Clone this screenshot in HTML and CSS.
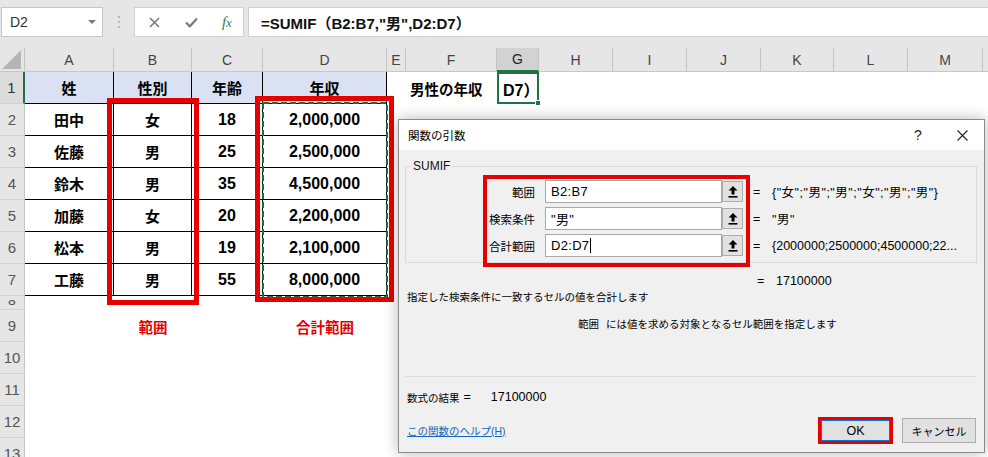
FILE: index.html
```html
<!DOCTYPE html>
<html lang="ja">
<head>
<meta charset="utf-8">
<title>SUMIF 関数の引数</title>
<link rel="stylesheet" href="styles.css">
</head>
<body>
<div class="app">
  <div class="fbar">
    <div class="namebox"><span>D2</span><span class="dd"></span></div>
    <div class="grip"><svg width="2" height="12" viewBox="0 0 2 12"><rect x="0" y="0" width="2" height="2" fill="#b8b8b8"/><rect x="0" y="5" width="2" height="2" fill="#b8b8b8"/><rect x="0" y="10" width="2" height="2" fill="#b8b8b8"/></svg></div>
    <div class="fbtns">
      <svg class="ic-x" width="11" height="11" viewBox="0 0 11 11"><path d="M1 1L10 10M10 1L1 10" stroke="#7b7b7b" stroke-width="1.6"/></svg>
      <svg class="ic-ok" width="13" height="11" viewBox="0 0 13 11"><path d="M1 5.5L4.8 9.3L12 1.5" stroke="#7b7b7b" stroke-width="2.2" fill="none"/></svg>
      <span class="fx"><i>f</i><i class="fxx">x</i></span>
    </div>
    <div class="finput">=SUMIF（B2:B7,"男",D2:D7）</div>
  </div>

  <div class="sheet">
    <div class="colhdr">
      <div class="corner"><svg width="20" height="19" viewBox="0 0 20 19"><path d="M19 0L19 19L0 19Z" fill="#b5b5b5"/></svg></div>
      <div class="ch wa">A</div>
      <div class="ch wb">B</div>
      <div class="ch wc">C</div>
      <div class="ch wd">D</div>
      <div class="ch we">E</div>
      <div class="ch wf">F</div>
      <div class="ch wg chsel">G</div>
      <div class="ch wh">H</div>
      <div class="ch wi">I</div>
      <div class="ch wj">J</div>
      <div class="ch wk">K</div>
      <div class="ch wl">L</div>
      <div class="ch wm">M</div>
      <div class="ch wn"></div>
    </div>

    <div class="row">
      <div class="rh rhsel">1</div>
      <div class="c wa tc th">姓</div>
      <div class="c wb tc th">性別</div>
      <div class="c wc tc th">年齢</div>
      <div class="c wd tc th">年収</div>
      <div class="c we"></div>
      <div class="c wf f1">男性の年収</div>
      <div class="c wg act">D7）<span class="handle"></span></div>
    </div>
    <div class="row">
      <div class="rh">2</div>
      <div class="c wa tc">田中</div>
      <div class="c wb tc">女</div>
      <div class="c wc tc num">18</div>
      <div class="c wd tc num">2,000,000</div>
    </div>
    <div class="row">
      <div class="rh">3</div>
      <div class="c wa tc">佐藤</div>
      <div class="c wb tc">男</div>
      <div class="c wc tc num">25</div>
      <div class="c wd tc num">2,500,000</div>
    </div>
    <div class="row">
      <div class="rh">4</div>
      <div class="c wa tc">鈴木</div>
      <div class="c wb tc">男</div>
      <div class="c wc tc num">35</div>
      <div class="c wd tc num">4,500,000</div>
    </div>
    <div class="row">
      <div class="rh">5</div>
      <div class="c wa tc">加藤</div>
      <div class="c wb tc">女</div>
      <div class="c wc tc num">20</div>
      <div class="c wd tc num">2,200,000</div>
    </div>
    <div class="row">
      <div class="rh">6</div>
      <div class="c wa tc">松本</div>
      <div class="c wb tc">男</div>
      <div class="c wc tc num">19</div>
      <div class="c wd tc num">2,100,000</div>
    </div>
    <div class="row">
      <div class="rh">7</div>
      <div class="c wa tc">工藤</div>
      <div class="c wb tc">男</div>
      <div class="c wc tc num">55</div>
      <div class="c wd tc num">8,000,000</div>
    </div>
    <div class="row row8">
      <div class="rh rh8"><span class="clip">8</span></div>
    </div>
    <div class="row">
      <div class="rh">9</div>
      <div class="c wa"></div>
      <div class="c wb lbl">範囲</div>
      <div class="c wc"></div>
      <div class="c wd lbl">合計範囲</div>
    </div>
    <div class="row"><div class="rh">10</div></div>
    <div class="row"><div class="rh">11</div></div>
    <div class="row"><div class="rh">12</div></div>
    <div class="row"><div class="rh">13</div></div>
  </div>

  <div class="hl hl-b"></div>
  <div class="hl hl-d"></div>
  <svg class="marq" width="126" height="196" viewBox="0 0 126 196"><rect x="1" y="1" width="124" height="194" fill="none" stroke="#1e6b41" stroke-width="2" stroke-dasharray="6 3"/></svg>

  <div class="dlg">
    <div class="dtitle">
      <span class="dt">関数の引数</span>
      <span class="tb q">?</span>
      <span class="tb"><svg width="11" height="11" viewBox="0 0 11 11"><path d="M0.5 0.5L10.5 10.5M10.5 0.5L0.5 10.5" stroke="#222" stroke-width="1.1"/></svg></span>
    </div>
    <div class="dbody">
      <fieldset class="grp">
        <legend>SUMIF</legend>
        <div class="args">
          <div class="arg">
            <span class="an">範囲</span>
            <div class="inp">B2:B7</div>
            <div class="rb"><svg width="10" height="12" viewBox="0 0 10 12"><path d="M5 0L9.5 4.5L6.5 4.5L6.5 8.5L3.5 8.5L3.5 4.5L0.5 4.5Z" fill="#000"/><rect x="0.5" y="10" width="9" height="1.6" fill="#000"/></svg></div>
            <span class="eq">=</span>
            <span class="val vq">{"女";"男";"男";"女";"男";"男"}</span>
          </div>
          <div class="arg">
            <span class="an">検索条件</span>
            <div class="inp">"男"</div>
            <div class="rb"><svg width="10" height="12" viewBox="0 0 10 12"><path d="M5 0L9.5 4.5L6.5 4.5L6.5 8.5L3.5 8.5L3.5 4.5L0.5 4.5Z" fill="#000"/><rect x="0.5" y="10" width="9" height="1.6" fill="#000"/></svg></div>
            <span class="eq">=</span>
            <span class="val vq">"男"</span>
          </div>
          <div class="arg">
            <span class="an">合計範囲</span>
            <div class="inp">D2:D7<span class="caret"></span></div>
            <div class="rb"><svg width="10" height="12" viewBox="0 0 10 12"><path d="M5 0L9.5 4.5L6.5 4.5L6.5 8.5L3.5 8.5L3.5 4.5L0.5 4.5Z" fill="#000"/><rect x="0.5" y="10" width="9" height="1.6" fill="#000"/></svg></div>
            <span class="eq">=</span>
            <span class="val">{2000000;2500000;4500000;22...</span>
          </div>
        </div>
      </fieldset>
      <div class="res1"><span class="eq">=</span><span class="val">17100000</span></div>
      <div class="desc">指定した検索条件に一致するセルの値を合計します</div>
      <div class="adesc"><span class="aname">範囲</span><span>には値を求める対象となるセル範囲を指定します</span></div>
      <div class="sep"></div>
      <div class="fres"><span>数式の結果</span><span class="feq">=</span><span class="fnum">17100000</span></div>
      <div class="foot">
        <a class="help">この関数のヘルプ(H)</a>
        <div class="okw"><button class="btn ok">OK</button></div>
        <button class="btn cancel">キャンセル</button>
      </div>
    </div>
  </div>
  <div class="hl hl-f"></div>
</div>
</body>
</html>
```

FILE: styles.css
```css
* { box-sizing: border-box; }
html, body { margin: 0; padding: 0; }
body {
  width: 988px;
  height: 457px;
  overflow: hidden;
  background: #fff;
  font-family: "Liberation Sans", "Noto Sans CJK JP", sans-serif;
  color: #000;
}
.app { position: relative; width: 988px; height: 457px; overflow: hidden; }

/* formula bar */
.fbar {
  height: 48px;
  background: #e6e6e6;
  display: flex;
  align-items: flex-start;
  padding-top: 7px;
}
.namebox {
  margin-left: 1px;
  width: 102px;
  height: 30px;
  background: #fff;
  border: 1px solid #c6c6c6;
  display: flex;
  align-items: center;
  justify-content: space-between;
  padding: 0 6px 0 8px;
  font-size: 14px;
  color: #333;
}
.dd {
  width: 0; height: 0;
  border-left: 4px solid transparent;
  border-right: 4px solid transparent;
  border-top: 4px solid #7a7a7a;
}
.grip { width: 31px; height: 30px; display: flex; align-items: center; justify-content: center; }
.fbtns {
  width: 110px;
  height: 30px;
  background: #fff;
  border: 1px solid #d0d0d0;
  display: flex;
  align-items: center;
  padding-left: 14px;
}
.ic-x { margin-right: 25px; }
.ic-ok { margin-right: 24px; }
.fx { font-family: "Liberation Serif", serif; color: #2e7d4f; font-size: 15px; line-height: 1; }
.fxx { font-size: 12px; }
.finput {
  flex: 1;
  margin-left: 4px;
  height: 30px;
  background: #fff;
  border: 1px solid #d0d0d0;
  border-right: none;
  display: flex;
  align-items: center;
  padding-left: 12px;
  font-size: 15px;
  font-weight: bold;
  color: #111;
}

/* sheet */
.sheet { display: flex; flex-direction: column; }
.colhdr { display: flex; height: 24px; background: #e6e6e6; border-bottom: 1px solid #c8c8c8; }
.corner { width: 25px; height: 24px; border-right: 1px solid #c4c4c4; display: flex; align-items: flex-end; justify-content: flex-end; padding: 0 2px 3px 0; }
.ch {
  height: 24px;
  border-right: 1px solid #c4c4c4;
  display: flex;
  align-items: center;
  justify-content: center;
  font-size: 14px;
  color: #444;
}
.chsel { background: #d2d2d2; color: #222; border-bottom: 2px solid #217346; }
.wa { width: 89px; }
.wb { width: 78px; }
.wc { width: 71px; }
.wd { width: 124px; }
.we { width: 19px; }
.wf { width: 91px; }
.wg { width: 42px; }
.wh { width: 74px; }
.wi { width: 74px; }
.wj { width: 74px; }
.wk { width: 73px; }
.wl { width: 74px; }
.wm { width: 75px; }
.wn { width: 5px; border-right: none; }

.row { display: flex; height: 32px; flex-shrink: 0; }
.row8 { height: 14px; }
.rh {
  width: 25px;
  height: 100%;
  background: #e6e6e6;
  border-right: 1px solid #c4c4c4;
  border-bottom: 1px solid #d2d2d2;
  display: flex;
  align-items: center;
  justify-content: center;
  font-size: 15px;
  color: #555;
  overflow: hidden;
}
.rhsel { background: #dcdcdc; border-right: 2px solid #217346; color: #333; }
.rh8 { align-items: flex-start; }
.clip { display: block; height: 9px; overflow: hidden; line-height: 18px; padding-top: 0; }
.c { height: 100%; display: flex; align-items: center; justify-content: center; }
.tc {
  border-right: 1px solid #000;
  border-bottom: 1px solid #000;
  font-weight: bold;
  font-size: 15px;
}
.th { background: #d9e1f2; }
.num { font-size: 16px; }
.f1 { justify-content: flex-start; padding-left: 4px; font-weight: bold; font-size: 14.5px; }
.act {
  position: relative;
  justify-content: flex-start;
  align-items: flex-end;
  padding: 0 0 1px 4px;
  border: 2px solid #217346;
  font-weight: bold;
  font-size: 16px;
}
.handle {
  position: absolute;
  right: -4px;
  bottom: -4px;
  width: 6px;
  height: 6px;
  background: #217346;
  border: 1px solid #fff;
}
.lbl { color: #e60000; font-weight: bold; font-size: 14.5px; }

/* highlight overlays */
.hl { position: absolute; border: 5px solid #e60000; }
.hl-b { left: 107px; top: 98px; width: 92px; height: 207px; }
.hl-d { left: 255px; top: 96px; width: 139px; height: 206px; }
.hl-f { left: 483px; top: 175px; width: 267px; height: 92px; border-width: 4px; }
.marq { position: absolute; left: 262px; top: 102px; }

/* dialog */
.dlg {
  position: absolute;
  left: 398px;
  top: 119px;
  width: 587px;
  height: 334px;
  background: #f0f0f0;
  border: 1px solid #8c8c8c;
  box-shadow: 0 0 14px rgba(0, 0, 0, 0.28);
  display: flex;
  flex-direction: column;
}
.dtitle {
  height: 30px;
  background: #fff;
  display: flex;
  align-items: center;
  padding-left: 9px;
  font-size: 11.5px;
}
.dt { flex: 1; }
.tb { width: 44px; height: 30px; display: flex; align-items: center; justify-content: center; }
.q { font-size: 14px; color: #222; }
.dbody { flex: 1; display: flex; flex-direction: column; padding: 0 7px 0 6px; }
.grp {
  margin: 8px 0 0 0;
  padding: 6px 0 5px 0;
  border: 1px solid #dadada;
  min-width: 0;
}
.grp legend { font-size: 12px; line-height: 16px; padding: 0 2px; margin-left: 5px; color: #111; }
.args { display: flex; flex-direction: column; gap: 4px; padding-left: 79px; }
.arg { display: flex; align-items: center; height: 23px; }
.an { width: 50px; text-align: right; font-size: 11.5px; margin-right: 10px; }
.inp {
  width: 177px;
  height: 23px;
  background: #fff;
  border: 1px solid #a8a8a8;
  display: flex;
  align-items: center;
  padding-left: 5px;
  font-size: 13px;
  letter-spacing: 0.3px;
}
.caret { display: inline-block; width: 1px; height: 15px; background: #000; margin-left: 1px; }
.rb {
  width: 21px;
  height: 21px;
  background: #e1e1e1;
  border: 1px solid #adadad;
  display: flex;
  align-items: center;
  justify-content: center;
}
.eq { font-size: 12.5px; margin-left: 10px; width: 19px; }
.val { font-size: 12.5px; white-space: nowrap; }
.vq { letter-spacing: 0.5px; }
.res1 { display: flex; align-items: center; height: 16px; margin-top: 10px; padding-left: 342px; }
.desc { height: 16px; line-height: 16px; padding-left: 2px; font-size: 10.5px; }
.adesc { height: 16px; line-height: 16px; margin-top: 11px; padding-left: 173px; font-size: 10.5px; }
.aname { margin-right: 7px; }
.sep { margin-top: 44px; height: 1px; background: #dcdcdc; }
.fres { display: flex; align-items: center; height: 16px; margin-top: 12px; padding-left: 2px; font-size: 10.5px; }
.feq { font-size: 12.5px; margin-left: 4px; margin-right: 20px; }
.fnum { font-size: 12.5px; }
.foot { display: flex; align-items: center; margin-top: 12px; height: 27px; padding-left: 2px; }
.help { flex: 1; color: #1565c0; text-decoration: underline; font-size: 10.5px; }
.okw { width: 75px; height: 27px; border: 3px solid #e60000; display: flex; }
.btn {
  font-family: "Liberation Sans", "Noto Sans CJK JP", sans-serif;
  background: #e1e1e1;
  border: 1px solid #adadad;
  padding: 0;
  color: #000;
}
.ok { width: 100%; height: 100%; border-color: #0078d7; font-size: 12.5px; }
.cancel { width: 74px; height: 25px; margin-left: 9px; margin-right: 1px; font-size: 11px; }
```
